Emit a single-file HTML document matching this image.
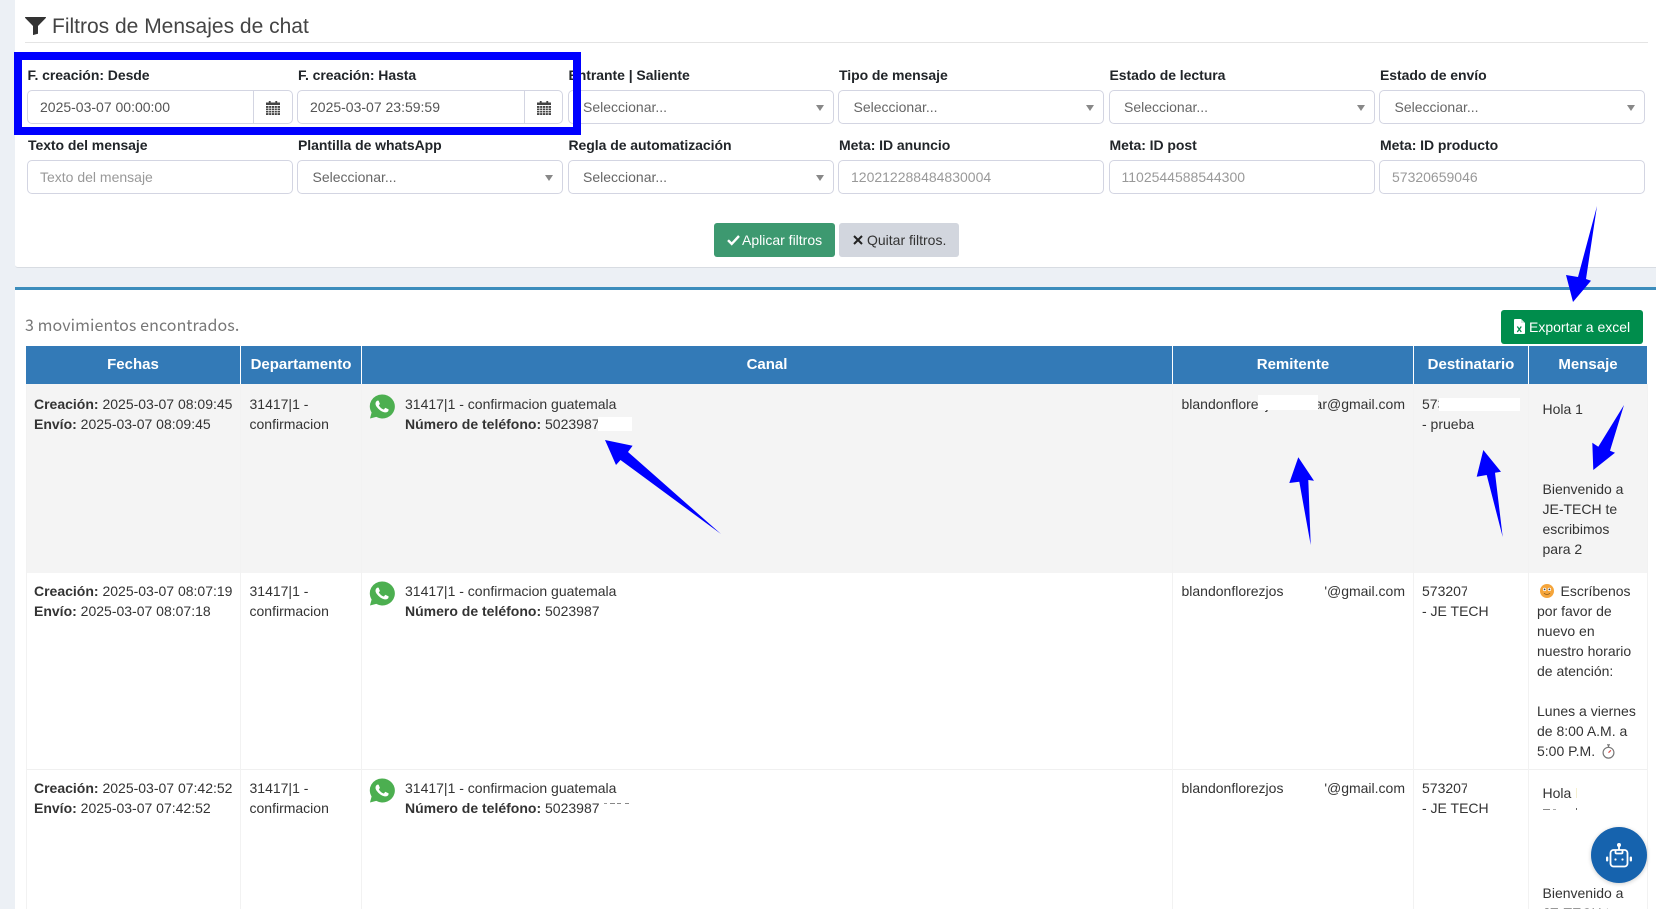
<!DOCTYPE html>
<html lang="es"><head><meta charset="utf-8"><title>Filtros de Mensajes de chat</title>
<style>
*{box-sizing:border-box}
html,body{margin:0;padding:0;width:1656px;height:909px;overflow:hidden;background:#ecf0f5;font-family:"Liberation Sans",Arial,sans-serif;font-size:14px;color:#333}
#w{position:relative;width:1656px;height:909px;overflow:hidden}
.a{position:absolute}
.t{position:absolute;white-space:nowrap;line-height:20px;height:20px}
.l{font-weight:700;color:#212529;letter-spacing:-.05px}
.f{position:absolute;height:34px;width:266px;background:#fff;border:1px solid #d3d5e2;border-radius:5px}
.v{position:absolute;white-space:nowrap;line-height:20px;top:6px;color:#555}
.p{color:#999}
.ar{position:absolute;top:14px;right:9px;width:0;height:0;border-left:4px solid transparent;border-right:4px solid transparent;border-top:6px solid #888}
.sep{position:absolute;top:0;bottom:0;left:225px;width:1px;background:#d3d5e2}
.th{position:absolute;top:346px;height:38px;background:#337ab7;color:#fff;font-weight:700;font-size:15px;text-align:center;line-height:38px;white-space:nowrap}
.vl{position:absolute;top:384px;bottom:0;width:1px;background:#f2f2f2}
.hl{position:absolute;left:26px;width:1622px;height:1px;background:#f0f0f0}
b{color:#333}
.w{position:absolute;background:#fff}
</style></head>
<body><div id="w">
<!-- top card -->
<div class="a" style="left:15px;top:0;width:1641px;height:268px;background:#fff;border-bottom:1px solid #d8dce2;border-bottom-left-radius:3px"></div>
<svg class="a" style="left:25px;top:17px" width="21" height="18" viewBox="0 0 21 18"><path fill="#333" d="M.5 0h20c.5 0 .7.6.3 1L13 9v7.500c0 .4-.3.5-.6.4L8.300 18c-.3 0-.3-.2-.3-.5V9L.2 1C-.2.600 0 0 .5 0z"/></svg>
<div class="t" style="left:52px;top:15px;font-size:21px;line-height:24px;height:24px;color:#444">Filtros de Mensajes de chat</div>
<div class="a" style="left:25px;top:42px;width:1623px;height:1px;background:#e4e4e4"></div>

<!-- labels row 1 -->
<div class="t l" style="left:27.500px;top:65px">F. creación: Desde</div>
<div class="t l" style="left:298px;top:65px">F. creación: Hasta</div>
<div class="t l" style="left:568.500px;top:65px">Entrante | Saliente</div>
<div class="t l" style="left:839px;top:65px">Tipo de mensaje</div>
<div class="t l" style="left:1109.500px;top:65px">Estado de lectura</div>
<div class="t l" style="left:1380px;top:65px">Estado de envío</div>

<!-- inputs row 1 -->
<div class="f" style="left:27px;top:90px"><span class="v" style="left:12px">2025-03-07 00:00:00</span><span class="sep"></span>
<svg class="a" style="left:238px;top:9px" width="14" height="15" viewBox="0 0 15 15" preserveAspectRatio="none"><path fill="#444" d="M0 2.500h3V1h2v1.500h5V1h2v1.500h3V5H0z"/><path fill="#444" d="M0 6h15v9H0z"/><path stroke="#fff" stroke-width=".7" d="M0 8.200h15M0 10.500h15M0 12.800h15M3 6v9M6 6v9M9 6v9M12 6v9"/></svg></div>
<div class="f" style="left:297px;top:90px"><span class="v" style="left:12px">2025-03-07 23:59:59</span><span class="sep" style="left:225.500px"></span>
<svg class="a" style="left:239px;top:9px" width="14" height="15" viewBox="0 0 15 15" preserveAspectRatio="none"><path fill="#444" d="M0 2.500h3V1h2v1.500h5V1h2v1.500h3V5H0z"/><path fill="#444" d="M0 6h15v9H0z"/><path stroke="#fff" stroke-width=".7" d="M0 8.200h15M0 10.500h15M0 12.800h15M3 6v9M6 6v9M9 6v9M12 6v9"/></svg></div>
<div class="f" style="left:567.500px;top:90px"><span class="v" style="left:14.500px;color:#666">Seleccionar...</span><i class="ar"></i></div>
<div class="f" style="left:838px;top:90px"><span class="v" style="left:14.500px;color:#666">Seleccionar...</span><i class="ar"></i></div>
<div class="f" style="left:1108.500px;top:90px"><span class="v" style="left:14.500px;color:#666">Seleccionar...</span><i class="ar"></i></div>
<div class="f" style="left:1379px;top:90px"><span class="v" style="left:14.500px;color:#666">Seleccionar...</span><i class="ar"></i></div>

<!-- labels row 2 -->
<div class="t l" style="left:28px;top:135px">Texto del mensaje</div>
<div class="t l" style="left:298px;top:135px">Plantilla de whatsApp</div>
<div class="t l" style="left:568.500px;top:135px">Regla de automatización</div>
<div class="t l" style="left:839px;top:135px">Meta: ID anuncio</div>
<div class="t l" style="left:1109.500px;top:135px">Meta: ID post</div>
<div class="t l" style="left:1380px;top:135px">Meta: ID producto</div>

<!-- inputs row 2 -->
<div class="f" style="left:27px;top:160px"><span class="v p" style="left:12px">Texto del mensaje</span></div>
<div class="f" style="left:297px;top:160px"><span class="v" style="left:14.500px;color:#666">Seleccionar...</span><i class="ar"></i></div>
<div class="f" style="left:567.500px;top:160px"><span class="v" style="left:14.500px;color:#666">Seleccionar...</span><i class="ar"></i></div>
<div class="f" style="left:838px;top:160px"><span class="v p" style="left:12px">120212288484830004</span></div>
<div class="f" style="left:1108.500px;top:160px"><span class="v p" style="left:12px">1102544588544300</span></div>
<div class="f" style="left:1379px;top:160px"><span class="v p" style="left:12px">57320659046</span></div>

<!-- buttons -->
<div class="a" style="left:714px;top:223px;width:121px;height:34px;background:#3d9970;border-radius:3px"></div>
<svg class="a" style="left:727px;top:234px" width="13" height="12" viewBox="0 0 13 12"><path fill="none" stroke="#fff" stroke-width="2.400" d="M1 6.200l3.700 3.700L12 2"/></svg>
<div class="t" style="left:742px;top:230px;color:#fff">Aplicar filtros</div>
<div class="a" style="left:839px;top:223px;width:120px;height:34px;background:#d2d6de;border-radius:3px"></div>
<svg class="a" style="left:853px;top:235px" width="10" height="10" viewBox="0 0 10 10"><path stroke="#222" stroke-width="2" d="M1 1l8 8M9 1L1 9"/></svg>
<div class="t" style="left:867px;top:230px;color:#333">Quitar filtros.</div>

<!-- second card -->
<div class="a" style="left:15px;top:287px;width:1641px;height:622px;background:#fff;border-top:3px solid #3c8dbc"></div>
<div class="t" style="left:25px;top:313px;height:22px;line-height:22px;font-family:'Noto Sans CJK SC','Liberation Sans',sans-serif;font-size:16px;color:#777;letter-spacing:.08px">3 movimientos encontrados.</div>

<!-- export -->
<div class="a" style="left:1501px;top:310px;width:142px;height:34px;background:#008d4c;border-radius:3px"></div>
<svg class="a" style="left:1514px;top:319px" width="11" height="15" viewBox="0 0 11 15"><path fill="#fff" d="M0 1c0-.6.4-1 1-1h6l4 4v10c0 .6-.4 1-1 1H1c-.6 0-1-.4-1-1z"/><path fill="#d5e8dd" d="M7 0l4 4H7z"/><path stroke="#008d4c" stroke-width="1.300" d="M3.300 7.500l4 5.500M7.300 7.500l-4 5.500"/></svg>
<div class="t" style="left:1529px;top:317px;color:#fff">Exportar a excel</div>

<!-- table bg -->
<div class="a" style="left:26px;top:384px;width:1622px;height:189px;background:#f4f4f4"></div>
<div class="hl" style="top:769px"></div>
<div class="a" style="left:1647px;top:384px;width:1px;height:525px;background:#f2f2f2"></div>
<div class="a" style="left:26px;top:384px;width:1px;height:525px;background:#f2f2f2"></div>
<div class="vl" style="left:240px"></div><div class="vl" style="left:361px"></div><div class="vl" style="left:1172px"></div><div class="vl" style="left:1413px"></div><div class="vl" style="left:1528px"></div>

<!-- header -->
<div class="th" style="left:26px;width:214px">Fechas</div>
<div class="th" style="left:241px;width:120px">Departamento</div>
<div class="th" style="left:362px;width:810px">Canal</div>
<div class="th" style="left:1173px;width:240px">Remitente</div>
<div class="th" style="left:1414px;width:114px">Destinatario</div>
<div class="th" style="left:1529px;width:118px">Mensaje</div>

<!-- row 1 -->
<div class="t" style="left:34px;top:394px"><b>Creación:</b> 2025-03-07 08:09:45</div>
<div class="t" style="left:34px;top:414px"><b>Envío:</b> 2025-03-07 08:09:45</div>
<div class="t" style="left:249.500px;top:394px">31417|1 -</div>
<div class="t" style="left:249.500px;top:414px">confirmacion</div>
<svg class="a" style="left:369px;top:394px" width="26" height="25" viewBox="0 0 24 24" preserveAspectRatio="none"><path fill="#4caf50" d="M12 .5A11.300 11.300 0 0 0 2.400 17.700L.9 23.500l5.800-1.500A11.500 11.500 0 1 0 12 .5z"/><path fill="#fff" d="M17.500 14.400c-.3-.1-1.800-.9-2-1-.3-.1-.5-.1-.7.1-.2.3-.8 1-.9 1.200-.2.2-.3.2-.6.1-.3-.1-1.300-.5-2.400-1.500-.9-.8-1.500-1.800-1.700-2.100-.2-.3 0-.5.1-.6l.4-.5c.1-.2.2-.3.3-.5.1-.2 0-.4 0-.5-.1-.1-.7-1.600-.9-2.200-.2-.6-.5-.5-.7-.5h-.6c-.2 0-.5.1-.8.4-.3.3-1 1-1 2.500s1.100 2.900 1.200 3.100c.1.2 2.100 3.200 5.100 4.500.7.3 1.300.5 1.700.6.7.2 1.400.2 1.900.1.6-.1 1.800-.7 2-1.400.2-.7.2-1.300.2-1.400-.1-.1-.3-.2-.6-.3z"/></svg>
<div class="t" style="left:405px;top:394px">31417|1 - confirmacion guatemala</div>
<div class="t" style="left:405px;top:414px"><b>Número de teléfono:</b> 5023987</div>
<div class="w" style="left:598px;top:417px;width:34px;height:14px"></div>
<div class="t" style="left:1181.500px;top:394px">blandonflorezj</div>
<div class="t" style="left:1405px;top:394px;transform:translateX(-100%)">ar@gmail.com</div>
<div class="w" style="left:1258px;top:395px;width:60px;height:15px"></div>
<div class="t" style="left:1422px;top:394px">573</div>
<div class="w" style="left:1439px;top:398px;width:81px;height:13px"></div>
<div class="t" style="left:1422px;top:414px">- prueba</div>
<div class="t" style="left:1542.500px;top:399px">Hola 1</div>
<div class="t" style="left:1542.500px;top:479px">Bienvenido a</div>
<div class="t" style="left:1542.500px;top:499px">JE-TECH te</div>
<div class="t" style="left:1542.500px;top:519px">escribimos</div>
<div class="t" style="left:1542.500px;top:539px">para 2</div>

<!-- row 2 -->
<div class="t" style="left:34px;top:581px"><b>Creación:</b> 2025-03-07 08:07:19</div>
<div class="t" style="left:34px;top:601px"><b>Envío:</b> 2025-03-07 08:07:18</div>
<div class="t" style="left:249.500px;top:581px">31417|1 -</div>
<div class="t" style="left:249.500px;top:601px">confirmacion</div>
<svg class="a" style="left:369px;top:581px" width="26" height="25" viewBox="0 0 24 24" preserveAspectRatio="none"><path fill="#4caf50" d="M12 .5A11.300 11.300 0 0 0 2.400 17.700L.9 23.500l5.800-1.500A11.500 11.500 0 1 0 12 .5z"/><path fill="#fff" d="M17.500 14.400c-.3-.1-1.800-.9-2-1-.3-.1-.5-.1-.7.1-.2.3-.8 1-.9 1.200-.2.2-.3.2-.6.1-.3-.1-1.300-.5-2.400-1.500-.9-.8-1.500-1.800-1.700-2.100-.2-.3 0-.5.1-.6l.4-.5c.1-.2.2-.3.3-.5.1-.2 0-.4 0-.5-.1-.1-.7-1.600-.9-2.200-.2-.6-.5-.5-.7-.5h-.6c-.2 0-.5.1-.8.4-.3.3-1 1-1 2.500s1.100 2.900 1.200 3.100c.1.2 2.100 3.200 5.100 4.500.7.3 1.300.5 1.700.6.7.2 1.400.2 1.900.1.6-.1 1.800-.7 2-1.400.2-.7.2-1.300.2-1.400-.1-.1-.3-.2-.6-.3z"/></svg>
<div class="t" style="left:405px;top:581px">31417|1 - confirmacion guatemala</div>
<div class="t" style="left:405px;top:601px"><b>Número de teléfono:</b> 5023987</div>
<div class="t" style="left:1181.500px;top:581px">blandonflorezjos</div>
<div class="t" style="left:1405px;top:581px;transform:translateX(-100%)">'@gmail.com</div>
<div class="t" style="left:1422px;top:581px">573207</div>
<div class="w" style="left:1467px;top:581px;width:6px;height:18px"></div>
<div class="t" style="left:1422px;top:601px">- JE TECH</div>
<svg class="a" style="left:1540px;top:584px" width="14" height="14" viewBox="0 0 14 14"><circle cx="7" cy="7" r="7" fill="#f5a53b"/><circle cx="4.600" cy="5.400" r="1.700" fill="#fff"/><circle cx="9.400" cy="5.400" r="1.700" fill="#fff"/><circle cx="4.600" cy="5.400" r=".9" fill="#444"/><circle cx="9.400" cy="5.400" r=".9" fill="#444"/><path d="M4 9.300c1.800 1.500 4.200 1.500 6 0" fill="none" stroke="#8a5a1c" stroke-width=".9"/></svg>
<div class="t" style="left:1560.500px;top:581px">Escríbenos</div>
<div class="t" style="left:1537px;top:601px">por favor de</div>
<div class="t" style="left:1537px;top:621px">nuevo en</div>
<div class="t" style="left:1537px;top:641px">nuestro horario</div>
<div class="t" style="left:1537px;top:661px">de atención:</div>
<div class="t" style="left:1537px;top:701px">Lunes a viernes</div>
<div class="t" style="left:1537px;top:721px">de 8:00 A.M. a</div>
<div class="t" style="left:1537px;top:741px">5:00 P.M.</div>
<svg class="a" style="left:1602px;top:744px" width="13" height="15" viewBox="0 0 13 15"><circle cx="6.500" cy="8.700" r="5.400" fill="#fff" stroke="#777" stroke-width="1.200"/><path d="M5 .8h3M6.500 1v2.200" stroke="#777" stroke-width="1.200"/><path d="M6.500 8.700l2.400-2.400" stroke="#d9534f" stroke-width="1.200"/></svg>

<!-- row 3 -->
<div class="t" style="left:34px;top:778px"><b>Creación:</b> 2025-03-07 07:42:52</div>
<div class="t" style="left:34px;top:798px"><b>Envío:</b> 2025-03-07 07:42:52</div>
<div class="t" style="left:249.500px;top:778px">31417|1 -</div>
<div class="t" style="left:249.500px;top:798px">confirmacion</div>
<svg class="a" style="left:369px;top:778px" width="26" height="25" viewBox="0 0 24 24" preserveAspectRatio="none"><path fill="#4caf50" d="M12 .5A11.300 11.300 0 0 0 2.400 17.700L.9 23.500l5.800-1.500A11.500 11.500 0 1 0 12 .5z"/><path fill="#fff" d="M17.500 14.400c-.3-.1-1.800-.9-2-1-.3-.1-.5-.1-.7.1-.2.3-.8 1-.9 1.200-.2.2-.3.2-.6.1-.3-.1-1.300-.5-2.400-1.500-.9-.8-1.500-1.800-1.700-2.100-.2-.3 0-.5.1-.6l.4-.5c.1-.2.2-.3.3-.5.1-.2 0-.4 0-.5-.1-.1-.7-1.600-.9-2.200-.2-.6-.5-.5-.7-.5h-.6c-.2 0-.5.1-.8.4-.3.3-1 1-1 2.500s1.100 2.900 1.200 3.100c.1.2 2.100 3.200 5.100 4.500.7.3 1.300.5 1.700.6.7.2 1.400.2 1.900.1.6-.1 1.800-.7 2-1.400.2-.7.2-1.300.2-1.400-.1-.1-.3-.2-.6-.3z"/></svg>
<div class="t" style="left:405px;top:778px">31417|1 - confirmacion guatemala</div>
<div class="t" style="left:405px;top:798px"><b>Número de teléfono:</b> 5023987</div>
<div class="a" style="left:604px;top:803px;width:3px;height:1px;background:#999"></div>
<div class="a" style="left:610px;top:803px;width:5px;height:1px;background:#888"></div>
<div class="a" style="left:617px;top:803px;width:4px;height:1px;background:#888"></div>
<div class="a" style="left:625px;top:803px;width:4px;height:1px;background:#888"></div>
<div class="t" style="left:1181.500px;top:778px">blandonflorezjos</div>
<div class="t" style="left:1405px;top:778px;transform:translateX(-100%)">'@gmail.com</div>
<div class="t" style="left:1422px;top:778px">573207</div>
<div class="w" style="left:1467px;top:778px;width:6px;height:18px"></div>
<div class="t" style="left:1422px;top:798px">- JE TECH</div>
<div class="t" style="left:1542.500px;top:783px">Hola</div>
<div class="a" style="left:1575.500px;top:788px;width:1px;height:10px;background:#f5f0d0"></div>
<div class="a" style="left:1543px;top:809px;width:7px;height:1px;background:#888"></div>
<div class="a" style="left:1553px;top:809px;width:3px;height:1px;background:#aaa"></div>
<div class="a" style="left:1576px;top:808px;width:1px;height:2px;background:#666"></div>
<div class="t" style="left:1542.500px;top:883px">Bienvenido a</div>
<div class="t" style="left:1542.500px;top:903px">JE-TECH te</div>

<!-- bot button -->
<div class="a" style="left:1591px;top:827px;width:56px;height:56px;border-radius:50%;background:#1663ae;box-shadow:0 1px 4px rgba(0,0,0,.2)"></div>
<svg class="a" style="left:1603px;top:841px" width="32" height="28" viewBox="0 0 32 28"><g fill="none" stroke="#fff" stroke-width="1.800"><rect x="7.500" y="9" width="17" height="16.500" rx="3"/><path d="M12.500 9v2.500c0 .6.400 1 1 1h5c.6 0 1-.4 1-1V9"/><path d="M16 5v4"/></g><circle cx="16" cy="4" r="2" fill="#fff"/><circle cx="12.500" cy="18.500" r="1.100" fill="#fff"/><circle cx="19.500" cy="18.500" r="1.100" fill="#fff"/><rect x="3" y="15.500" width="2.300" height="5" rx="1.150" fill="#fff"/><rect x="26.700" y="15.500" width="2.300" height="5" rx="1.150" fill="#fff"/></svg>

<!-- annotations -->
<div class="a" style="left:14px;top:52px;width:567px;height:83px;border:8px solid #0000ff"></div>
<svg class="a" style="left:0;top:0" width="1656" height="909" viewBox="0 0 1656 909">
<g fill="#0000ff">
<path d="M605 440L632.600 445.700 628 452 721 534 620.500 460 616 465z"/>
<path d="M1597 206L1586 279 1591 280.700 1573 302 1566 275 1578 277z"/>
<path d="M1298.300 457.300L1314 480.700 1308.300 480 1310.700 545 1299.300 481.700 1289.300 483z"/>
<path d="M1483.300 450L1501 471.700 1495 472.700 1502.700 537 1486.700 475 1476.700 476.700z"/>
<path d="M1624 405L1610 450.700 1615 452.700 1593.300 470 1592.300 442.700 1598.300 446.700z"/>
</g></svg>
</div></body></html>
